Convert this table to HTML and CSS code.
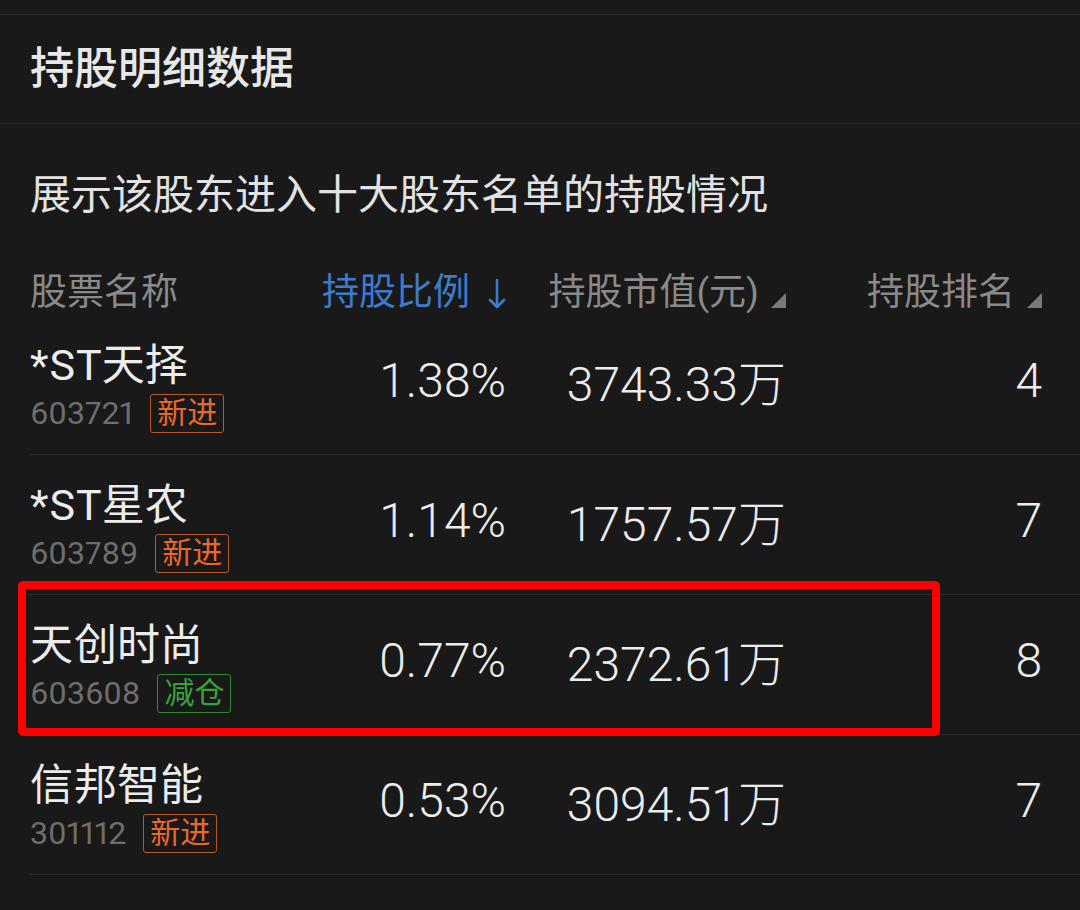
FILE: index.html
```html
<!DOCTYPE html>
<html lang="zh-CN">
<head>
    <meta charset="UTF-8">
    <meta name="viewport" content="width=device-width, initial-scale=1.0">
    <title>持股明细数据</title>
    <link rel="stylesheet" href="styles.css">
</head>
<body>
    <div class="top-line"></div>
    <div class="title-bar">
        <h1 class="title">持股明细数据</h1>
    </div>
    <p class="desc">展示该股东进入十大股东名单的持股情况</p>

    <section class="holdings">
        <div class="thead">
            <span class="th th-name">股票名称</span>
            <span class="th th-active">持股比例
                <svg class="sort-arrow" width="18" height="30" viewBox="0 0 18 30"><path d="M9 1 V28 M2 21 L9 28 L16 21" fill="none" stroke="currentColor" stroke-width="2.6" stroke-linecap="round" stroke-linejoin="round"/></svg>
            </span>
            <span class="th">持股市值(元)
                <svg class="sort-tri" width="15" height="15" viewBox="0 0 15 15"><polygon points="15,0 15,15 0,15" fill="currentColor"/></svg>
            </span>
            <span class="th">持股排名
                <svg class="sort-tri" width="15" height="15" viewBox="0 0 15 15"><polygon points="15,0 15,15 0,15" fill="currentColor"/></svg>
            </span>
        </div>

        <div class="row">
            <div class="stock">
                <div class="stock-name">*ST天择</div>
                <div class="stock-sub">
                    <span class="code">603721</span>
                    <span class="tag tag-new">新进</span>
                </div>
            </div>
            <div class="num">1.38%</div>
            <div class="num">3743.33万</div>
            <div class="num">4</div>
        </div>

        <div class="row">
            <div class="stock">
                <div class="stock-name">*ST星农</div>
                <div class="stock-sub">
                    <span class="code">603789</span>
                    <span class="tag tag-new">新进</span>
                </div>
            </div>
            <div class="num">1.14%</div>
            <div class="num">1757.57万</div>
            <div class="num">7</div>
        </div>

        <div class="row row-marked">
            <div class="stock">
                <div class="stock-name">天创时尚</div>
                <div class="stock-sub">
                    <span class="code">603608</span>
                    <span class="tag tag-cut">减仓</span>
                </div>
            </div>
            <div class="num">0.77%</div>
            <div class="num">2372.61万</div>
            <div class="num">8</div>
            <div class="mark-box"></div>
        </div>

        <div class="row">
            <div class="stock">
                <div class="stock-name">信邦智能</div>
                <div class="stock-sub">
                    <span class="code">301112</span>
                    <span class="tag tag-new">新进</span>
                </div>
            </div>
            <div class="num">0.53%</div>
            <div class="num">3094.51万</div>
            <div class="num">7</div>
        </div>
    </section>
</body>
</html>
```

FILE: styles.css
```css
body {
    margin: 0;
    background-color: #191919;
    color: #e6e6e6;
    font-family: Roboto, "Noto Sans CJK SC", sans-serif;
    overflow: hidden;
}

.top-line {
    height: 14px;
    border-bottom: 1px solid #2a2a2a;
}

.title-bar {
    height: 108px;
    display: flex;
    align-items: center;
    padding-left: 30px;
    border-bottom: 1px solid #2a2a2a;
}

.title {
    margin: 0;
    font-size: 44px;
    font-weight: 500;
    color: #e8e8e8;
    line-height: 1;
}

.desc {
    margin: 0;
    padding: 43px 0 0 30px;
    font-size: 41px;
    line-height: 56px;
    color: #e2e2e2;
}

.holdings {
    padding-left: 29px;
}

/* four columns, all but the first right aligned */
.thead,
.row {
    display: grid;
    grid-template-columns: 271px 206px 280px 256px;
}

.thead {
    height: 92px;
    box-sizing: border-box;
    padding-top: 48px;
    align-items: start;
}

.th {
    justify-self: end;
    display: flex;
    align-items: center;
    gap: 12px;
    font-size: 37px;
    line-height: 44px;
    color: #8a8a8a;
}

.th-name {
    justify-self: start;
    padding-left: 1px;
}

.th-active {
    color: #3d7ccc;
    gap: 18px;
}

.sort-arrow {
    margin-top: 2px;
}

.sort-tri {
    color: #7a7a7a;
    margin-top: 14px;
}

.row {
    position: relative;
    height: 140px;
    box-sizing: border-box;
    border-bottom: 1px solid #2c2c2c;
    align-items: center;
}

.stock {
    align-self: start;
    padding-top: 28px;
    padding-left: 1px;
}

.stock-name {
    font-size: 43px;
    line-height: 44px;
    color: #ececec;
}

.stock-name::first-letter {
    letter-spacing: 1px;
}

.stock-sub {
    display: flex;
    align-items: center;
    gap: 17px;
    margin-top: 7px;
}

.code {
    font-size: 32px;
    font-variant-numeric: proportional-nums;
    color: #6e6e6e;
    line-height: 39px;
}

.tag {
    box-sizing: border-box;
    height: 39px;
    padding: 0 6px;
    border: 1.5px solid;
    border-radius: 3px;
    font-size: 30px;
    line-height: 35px;
}

.tag-new {
    color: #e8692f;
    border-color: #b85a2c;
}

.tag-cut {
    color: #3aa23a;
    border-color: #2f8a2f;
}

.num {
    justify-self: end;
    font-size: 48px;
    font-weight: 300;
    color: #ececec;
    padding-bottom: 9px;
}

.mark-box {
    position: absolute;
    left: -11px;
    top: -14px;
    width: 922px;
    height: 155px;
    box-sizing: border-box;
    border: 8px solid #ff0000;
    border-radius: 5px;
    pointer-events: none;
}
```
